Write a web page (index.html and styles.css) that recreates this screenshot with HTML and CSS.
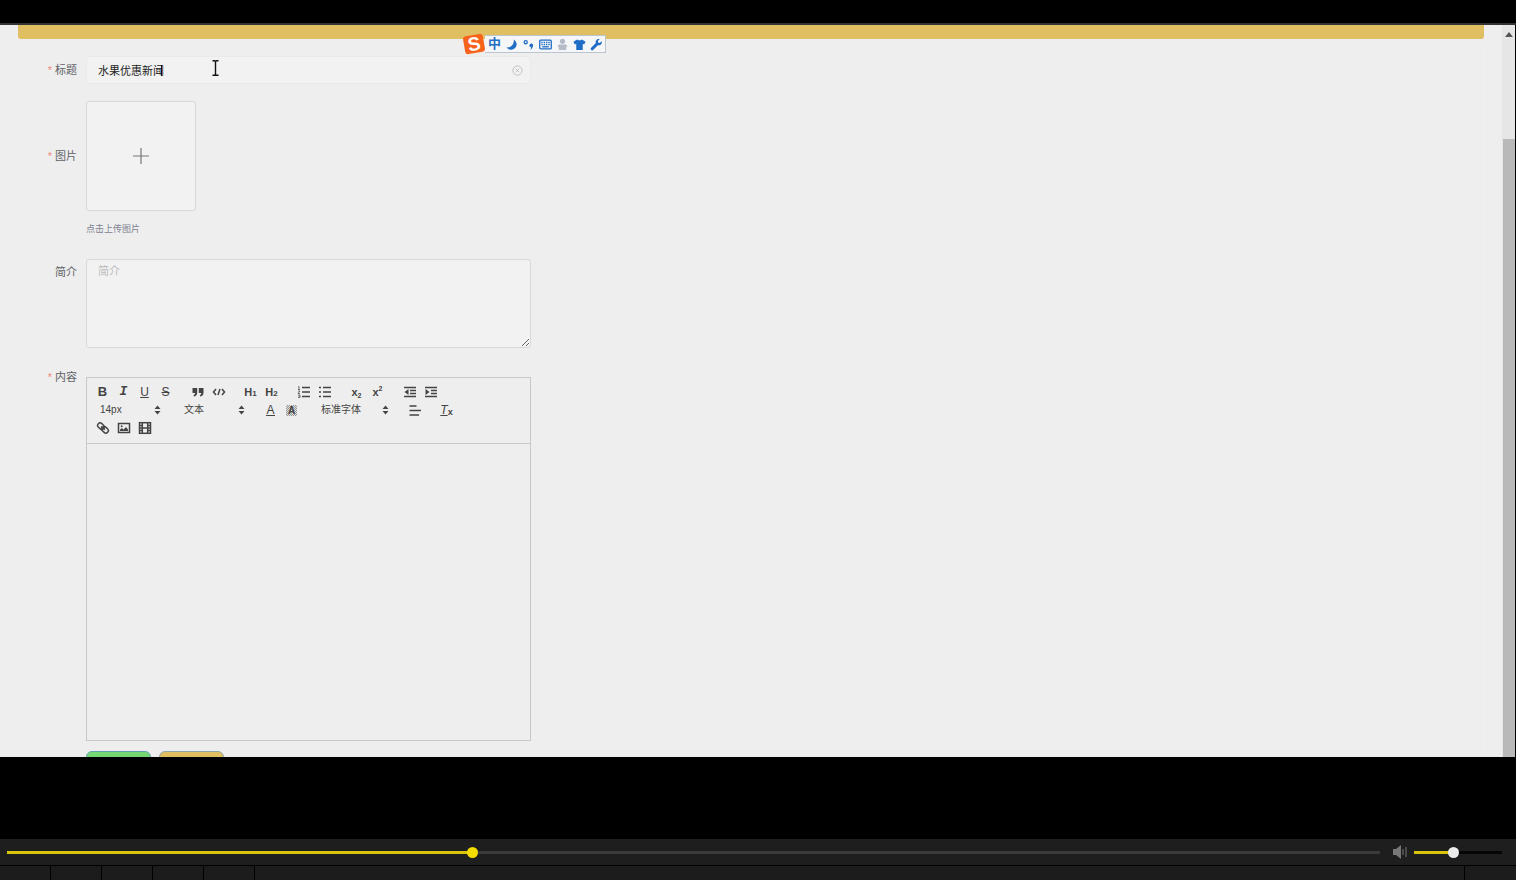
FILE: index.html
```html
<!DOCTYPE html>
<html lang="zh-CN">
<head>
  <meta charset="UTF-8">
  <meta name="viewport" content="width=device-width, initial-scale=1">
  <title>新闻</title>
  <link rel="stylesheet" href="styles.css">
</head>
<body>
  <header class="titlebar"></header>

  <main class="screen">
    <div class="page">
      <div class="banner"></div>

      <form class="panel">
        <div class="form-item">
          <label class="required" for="title">标题</label>
          <div class="field input-box">
            <input type="text" id="title" value="水果优惠新闻">
            <button type="button" class="clear-btn" aria-label="清空">
              <svg width="11" height="11" viewBox="0 0 11 11" fill="none" stroke="currentColor" stroke-width="0.9"><circle cx="5.5" cy="5.5" r="4.6"/><path d="M3.8 3.8l3.4 3.4M7.2 3.8L3.8 7.2"/></svg>
            </button>
          </div>
        </div>

        <div class="form-item">
          <label class="required label-upload" for="upload">图片</label>
          <div class="field">
            <button type="button" class="upload" id="upload">
              <svg width="18" height="18" viewBox="0 0 18 18" fill="none" stroke="currentColor" stroke-width="1.2"><path d="M9 1v16M1 9h16"/></svg>
            </button>
            <p class="hint">点击上传图片</p>
          </div>
        </div>

        <div class="form-item">
          <label class="label-intro" for="intro">简介</label>
          <textarea class="field" id="intro" placeholder="简介"></textarea>
        </div>

        <div class="form-item item-editor">
          <label class="required label-editor" for="content">内容</label>
          <div class="field editor">
            <div class="toolbar">
              <div class="tool-row">
                <div class="tools">
                  <button type="button"><b>B</b></button>
                  <button type="button"><i class="mono">I</i></button>
                  <button type="button"><u>U</u></button>
                  <button type="button"><s>S</s></button>
                </div>
                <div class="tools">
                  <button type="button" aria-label="引用"><svg viewBox="0 0 14 14"><path class="solid" d="M1.500 3h4.700v4.500c0 2.200-1 3.600-3.200 4l-.5-1.300C3.600 9.800 4 9 4 8H1.500zM7.800 3h4.700v4.500c0 2.200-1 3.600-3.200 4l-.5-1.300c1.100-.4 1.500-1.200 1.500-2.200H7.800z"/></svg></button>
                  <button type="button" aria-label="代码"><svg viewBox="0 0 14 14"><path d="M4 4L1.500 7 4 10M10 4l2.500 3L10 10M8 4L6 10"/></svg></button>
                </div>
                <div class="tools">
                  <button type="button" class="heading">H<small>1</small></button>
                  <button type="button" class="heading">H<small>2</small></button>
                </div>
                <div class="tools">
                  <button type="button" aria-label="有序列表"><svg viewBox="0 0 14 14"><path d="M5 2.500h8M5 7h8M5 11.500h8"/><path class="thin" d="M1 2l1-.5v3M1 4.500h2M1 6h2L1 8.500h2M1 10h2v1.200H1.500M3 11.200v1.300H1"/></svg></button>
                  <button type="button" aria-label="无序列表"><svg viewBox="0 0 14 14"><path d="M5 2.500h8M5 7h8M5 11.500h8M1 2.500h2M1 7h2M1 11.500h2"/></svg></button>
                </div>
                <div class="tools">
                  <button type="button" class="script">x<sub>2</sub></button>
                  <button type="button" class="script">x<sup>2</sup></button>
                </div>
                <div class="tools">
                  <button type="button" aria-label="减少缩进"><svg viewBox="0 0 14 14"><path d="M1 2.500h12M7 5.500h6M7 8.500h6M1 11.500h12"/><path class="solid" d="M5.500 4v6L1.500 7z"/></svg></button>
                  <button type="button" aria-label="增加缩进"><svg viewBox="0 0 14 14"><path d="M1 2.500h12M7 5.500h6M7 8.500h6M1 11.500h12"/><path class="solid" d="M1.500 4v6l4-3z"/></svg></button>
                </div>
              </div>

              <div class="tool-row">
                <div class="picker">
                  <select aria-label="字号"><option>14px</option></select>
                  <svg class="arrows" viewBox="0 0 7 10"><path d="M3.500 0.500L6.500 4h-6zM3.500 9.500L0.500 6h6z"/></svg>
                </div>
                <div class="picker">
                  <select aria-label="段落"><option>文本</option></select>
                  <svg class="arrows" viewBox="0 0 7 10"><path d="M3.500 0.500L6.500 4h-6zM3.500 9.500L0.500 6h6z"/></svg>
                </div>
                <div class="tools">
                  <button type="button"><span class="color">A</span></button>
                  <button type="button"><span class="background">A</span></button>
                </div>
                <div class="picker picker-font">
                  <select aria-label="字体"><option>标准字体</option></select>
                  <svg class="arrows" viewBox="0 0 7 10"><path d="M3.500 0.500L6.500 4h-6zM3.500 9.500L0.500 6h6z"/></svg>
                </div>
                <div class="tools">
                  <button type="button" aria-label="对齐"><svg viewBox="0 0 14 14"><path d="M1.500 3h7M1.500 7.500h11.500M1.500 12h9.500"/></svg></button>
                </div>
                <div class="tools">
                  <button type="button" class="clean" aria-label="清除格式"><i>T</i><small>x</small></button>
                </div>
              </div>

              <div class="tool-row">
                <div class="tools">
                  <button type="button" aria-label="链接"><svg viewBox="0 0 14 14"><g transform="rotate(42 7 7)"><rect x="0.700" y="4.500" width="7" height="5" rx="2.500"/><rect x="6.300" y="4.500" width="7" height="5" rx="2.500"/><path d="M4.500 7h5"/></g></svg></button>
                  <button type="button" aria-label="图片"><svg viewBox="0 0 14 14"><rect x="1.500" y="2.500" width="11" height="9"/><path class="solid" d="M3 10V8.500L5 7l1.500 1.500L9 6l2 2.500V10z"/><circle class="solid" cx="4.700" cy="5.200" r="1"/></svg></button>
                  <button type="button" aria-label="视频"><svg viewBox="0 0 14 14"><rect x="1.500" y="1.700" width="11" height="10.600"/><path d="M4.300 2v10M9.700 2v10M4.300 7h5.400M2 4.500h2M2 7h2M2 9.500h2M10 4.500h2M10 7h2M10 9.500h2"/></svg></button>
                </div>
              </div>
            </div>
            <div class="editor-body" id="content" contenteditable="true" role="textbox" aria-label="内容"></div>
          </div>
        </div>

        <div class="actions">
          <button type="submit" class="btn btn-submit" aria-label="提交"></button>
          <button type="button" class="btn btn-cancel" aria-label="取消"></button>
        </div>
      </form>
    </div>

    <div class="scrollbar">
      <svg width="8" height="5" viewBox="0 0 8 5"><path d="M4 0l4 5H0z"/></svg>
      <div class="scroll-thumb"></div>
    </div>

    <!-- caret and mouse pointer -->
    <svg class="caret" viewBox="0 0 1 11"><path d="M0.500 0v11"/></svg>
    <svg class="pointer" viewBox="0 0 7 16"><path d="M0.500 0.800h2q1 0 1 1 0-1 1-1h2M3.500 1v14M0.500 15.200h2q1 0 1-1 0 1 1 1h2"/></svg>

    <!-- input method bar -->
    <div class="ime">
      <svg class="ime-logo" viewBox="0 0 24 22">
        <g transform="rotate(-10 12 11)">
          <rect x="2" y="2" width="20" height="18" rx="3"/>
          <text x="12" y="17.500" text-anchor="middle">S</text>
        </g>
      </svg>
      <div class="ime-bar">
        <span>中</span>
        <svg viewBox="0 0 14 14"><path d="M9.500 1.500a6 6 0 1 1-8 8.500c5 1 8.500-3 8-8.500z"/></svg>
        <svg viewBox="0 0 14 14"><circle class="line" cx="4" cy="4.500" r="1.700"/><path d="M8 8a2 2 0 1 1 3.700 1c-.2 2-1.500 3.200-3 3.700 1-1 1.200-1.700 1.100-2.700A2 2 0 0 1 8 8z"/></svg>
        <svg viewBox="0 0 14 14"><rect class="line" x="0.800" y="2.300" width="12.400" height="9.400" rx="1"/><path class="dash" d="M2.500 4.700h9.500M2.500 7h9.500"/><path class="line" d="M3.500 9.500h7"/></svg>
        <svg class="muted" viewBox="0 0 14 14"><circle cx="7" cy="3.600" r="2.800"/><path d="M3 7h8l1.500 2.500H11V13H3V9.500H1.500z"/></svg>
        <svg viewBox="0 0 14 14"><path d="M4.500 1.500q2.500 2 5 0L13.500 4l-1.500 3-1.500-.7V13h-7V6.300L2 7 .5 4z"/></svg>
        <svg viewBox="0 0 14 14"><path d="M12.500 3.500L10.500 5.300 8.800 4.900 8.500 3.200 10.500 1.200C7.500.5 5.500 3 6.300 5.500L1 10.800q-.8 1.300.3 2.200t2-.1L8.500 7.700c2.800.8 5-1.500 4-4.200z"/></svg>
      </div>
    </div>
  </main>

  <footer class="player">
    <div class="controls">
      <input type="range" class="slider progress" aria-label="进度" min="0" max="1000" value="338" style="--fill: 33.9%">
      <svg class="speaker" viewBox="0 0 16 14"><path class="cone" d="M1 4h3l5-4v14l-5-4H1z"/><path d="M11 4v6M14 2v10"/></svg>
      <input type="range" class="slider volume" aria-label="音量" min="0" max="100" value="44" style="--fill: 44%">
    </div>
    <div class="taskbar">
      <span></span><span></span><span></span><span></span><span></span>
      <span class="corner"></span>
    </div>
  </footer>
</body>
</html>
```
FILE: styles.css
```css
* { margin: 0; padding: 0; box-sizing: border-box; }

:root {
  --page-bg: #eeeeee;
  --field-bg: #f2f2f2;
  --border: #d8d8d8;
  --gold: #e0bf62;
  --icon: #444;
  --ime-blue: #1f6dc4;
  --yellow: #f4dc00;
}

body {
  height: 100vh;
  display: flex;
  flex-direction: column;
  background: #000;
  color: #606266;
  font-family: "Liberation Sans", "Noto Sans CJK SC", sans-serif;
  font-size: 11px;
  overflow: hidden;
}

button, input, select, textarea {
  font: inherit;
  color: inherit;
  border: none;
  background: none;
  outline: none;
}

.titlebar {
  flex: none;
  height: 25px;
  border-bottom: 2px solid #333;
}

/* Captured page */
.screen {
  position: relative;
  flex: 1;
  min-height: 0;
  display: flex;
  margin-right: 1px;
  background: var(--page-bg);
  overflow: hidden;
}

.page {
  flex: 1;
  padding: 0 18px;
}

.banner {
  height: 14px;
  background: var(--gold);
  border-radius: 0 0 3px 3px;
}

.panel {
  margin-top: 5px;
  padding-top: 11px;
  border: 1px solid #f0f0f0;
}

.form-item {
  display: flex;
  margin-bottom: 17px;
}

.form-item label {
  flex: none;
  width: 67px;
  padding-right: 9px;
  text-align: right;
  line-height: 28px;
}

.required::before {
  content: "* ";
  color: #f08a7a;
}

.form-item .label-upload { line-height: 110px; }
.form-item .label-intro { line-height: 34px; }
.form-item .label-editor { line-height: 0; }

.field {
  flex: 0 1 445px;
}

.input-box {
  display: flex;
  align-items: center;
  height: 28px;
  padding: 0 7px 0 11px;
  background: var(--field-bg);
  border: 1px solid #eaeaea;
  border-radius: 3px;
}

.input-box input {
  flex: 1;
  height: 26px;
  color: #222;
}

.clear-btn {
  display: flex;
  color: #bbb;
}

.upload {
  display: flex;
  align-items: center;
  justify-content: center;
  width: 110px;
  height: 110px;
  color: #777;
  background: var(--field-bg);
  border: 1px solid var(--border);
  border-radius: 3px;
}

.hint {
  margin-top: 10px;
  font-size: 9px;
  line-height: 17px;
  color: #7c8290;
}

textarea.field {
  height: 89px;
  margin-top: 4px;
  padding: 2px 11px;
  background: var(--field-bg);
  border: 1px solid var(--border);
  border-radius: 3px;
}

textarea::placeholder { color: #bbb; }

.item-editor {
  margin-top: 29px;
  margin-bottom: 10px;
}

/* Rich text editor */
.editor { border: 1px solid #c8c8c8; }

.toolbar {
  padding: 5px 5px 6px;
  border-bottom: 1px solid #c8c8c8;
}

.tool-row {
  display: flex;
  gap: 11px;
  height: 18px;
}

.tools { display: flex; }

.tools button {
  display: flex;
  align-items: center;
  justify-content: center;
  width: 21px;
  height: 18px;
  font-size: 12px;
  line-height: 18px;
  color: var(--icon);
}

.tools svg {
  width: 14px;
  height: 14px;
  fill: none;
  stroke: var(--icon);
  stroke-width: 1.5;
}

.tools .solid {
  fill: var(--icon);
  stroke: none;
}

.tools .thin { stroke-width: 0.7; }

.tools b { font-size: 13px; }

.tools .mono {
  font-family: "Liberation Mono", monospace;
  font-size: 13px;
  font-weight: bold;
}

.tools .heading, .tools .script {
  font-size: 11px;
  font-weight: bold;
}

.heading small { font-size: 8px; padding-top: 3px; }

.script sub, .script sup { font-size: 7px; }
.script sub { padding-top: 7px; }
.script sup { padding-bottom: 7px; }

.color {
  line-height: 10px;
  border-bottom: 1px solid var(--icon);
}

.background {
  width: 11px;
  font-size: 10px;
  font-weight: bold;
  line-height: 11px;
  background: repeating-conic-gradient(#999 0 25%, #ddd 0 50%) 0 0 / 2px 2px;
}

.clean i { text-decoration: underline; }
.clean small { font-size: 9px; font-weight: bold; padding-top: 4px; }

.picker {
  display: flex;
  align-items: center;
  width: 73px;
  padding: 0 4px 0 8px;
}

.picker-font { width: 80px; }

.picker select {
  flex: 1;
  min-width: 0;
  appearance: none;
  font-size: 10px;
  line-height: 18px;
  color: var(--icon);
}

.arrows {
  width: 7px;
  height: 10px;
  fill: var(--icon);
}

.editor-body {
  min-height: 296px;
  padding: 9px 11px;
  outline: none;
}

.actions {
  display: flex;
  gap: 8px;
  padding-left: 67px;
}

.btn {
  width: 65px;
  height: 28px;
  border: 1px solid #5fa3b0;
  border-radius: 6px;
}

.btn-submit { background: #76d873; }
.btn-cancel { background: var(--gold); border-color: #8fa6ad; }

.scrollbar {
  display: flex;
  flex-direction: column;
  align-items: center;
  width: 13px;
  padding-top: 7px;
  background: #e6e6e6;
}

.scrollbar svg { fill: #555; }

.scroll-thumb {
  flex: 1;
  width: 12px;
  margin-top: 102px;
  background: #b9b9b9;
}

/* Overlays on the captured page */
.caret, .pointer {
  position: absolute;
  fill: none;
  stroke: #111;
}

.caret { left: 161px; top: 40px; width: 1px; height: 11px; }
.pointer { left: 212px; top: 35px; width: 7px; height: 16px; stroke-width: 1.4; }

.ime {
  position: absolute;
  left: 462px;
  top: 8px;
  display: flex;
  align-items: center;
}

.ime-logo {
  width: 24px;
  height: 22px;
  fill: #f8631b;
}

.ime-logo text {
  fill: #fff;
  font-size: 19px;
  font-weight: bold;
}

.ime-bar {
  display: flex;
  align-items: center;
  gap: 4px;
  height: 18px;
  padding: 0 2px 0 3px;
  margin-left: -1px;
  background: #f5f6f8;
  border: 1px solid #bcc4d0;
  border-left: none;
}

.ime-bar span {
  width: 13px;
  font-size: 13px;
  line-height: 16px;
  font-weight: bold;
  color: var(--ime-blue);
}

.ime-bar svg {
  width: 13px;
  height: 13px;
  fill: var(--ime-blue);
}

.ime-bar .line, .ime-bar .dash {
  fill: none;
  stroke: var(--ime-blue);
  stroke-width: 1.4;
}

.ime-bar .dash { stroke-dasharray: 1.5 1; }
.ime-bar .muted { fill: #b4bac6; }

/* Player */
.player {
  flex: none;
  padding-top: 82px;
}

.controls {
  display: flex;
  align-items: center;
  height: 26px;
  padding: 0 14px 0 7px;
  background: #1e1e1e;
}

.slider {
  appearance: none;
  height: 11px;
  min-width: 0;
}

.progress { flex: 1; --thumb: var(--yellow); --rest: #3a3a3a; }
.volume { width: 88px; --thumb: #ececec; --rest: #050505; }

.slider::-webkit-slider-runnable-track {
  height: 3px;
  background: linear-gradient(to right, #d8c40a var(--fill), var(--rest) var(--fill));
}

.slider::-webkit-slider-thumb {
  appearance: none;
  width: 11px;
  height: 11px;
  margin-top: -4px;
  border-radius: 50%;
  background: var(--thumb);
}

.speaker {
  width: 16px;
  height: 14px;
  margin: 0 6px 0 12px;
  stroke: #777;
  fill: none;
}

.speaker .cone { fill: #777; stroke: none; }

.taskbar {
  display: flex;
  height: 15px;
  background: #1c1c1c;
  border-top: 1px solid #000;
}

.taskbar span {
  width: 51px;
  border-right: 1px solid #000;
}

.taskbar .corner {
  width: 52px;
  margin-left: auto;
  border-right: none;
  border-left: 1px solid #000;
}
```
